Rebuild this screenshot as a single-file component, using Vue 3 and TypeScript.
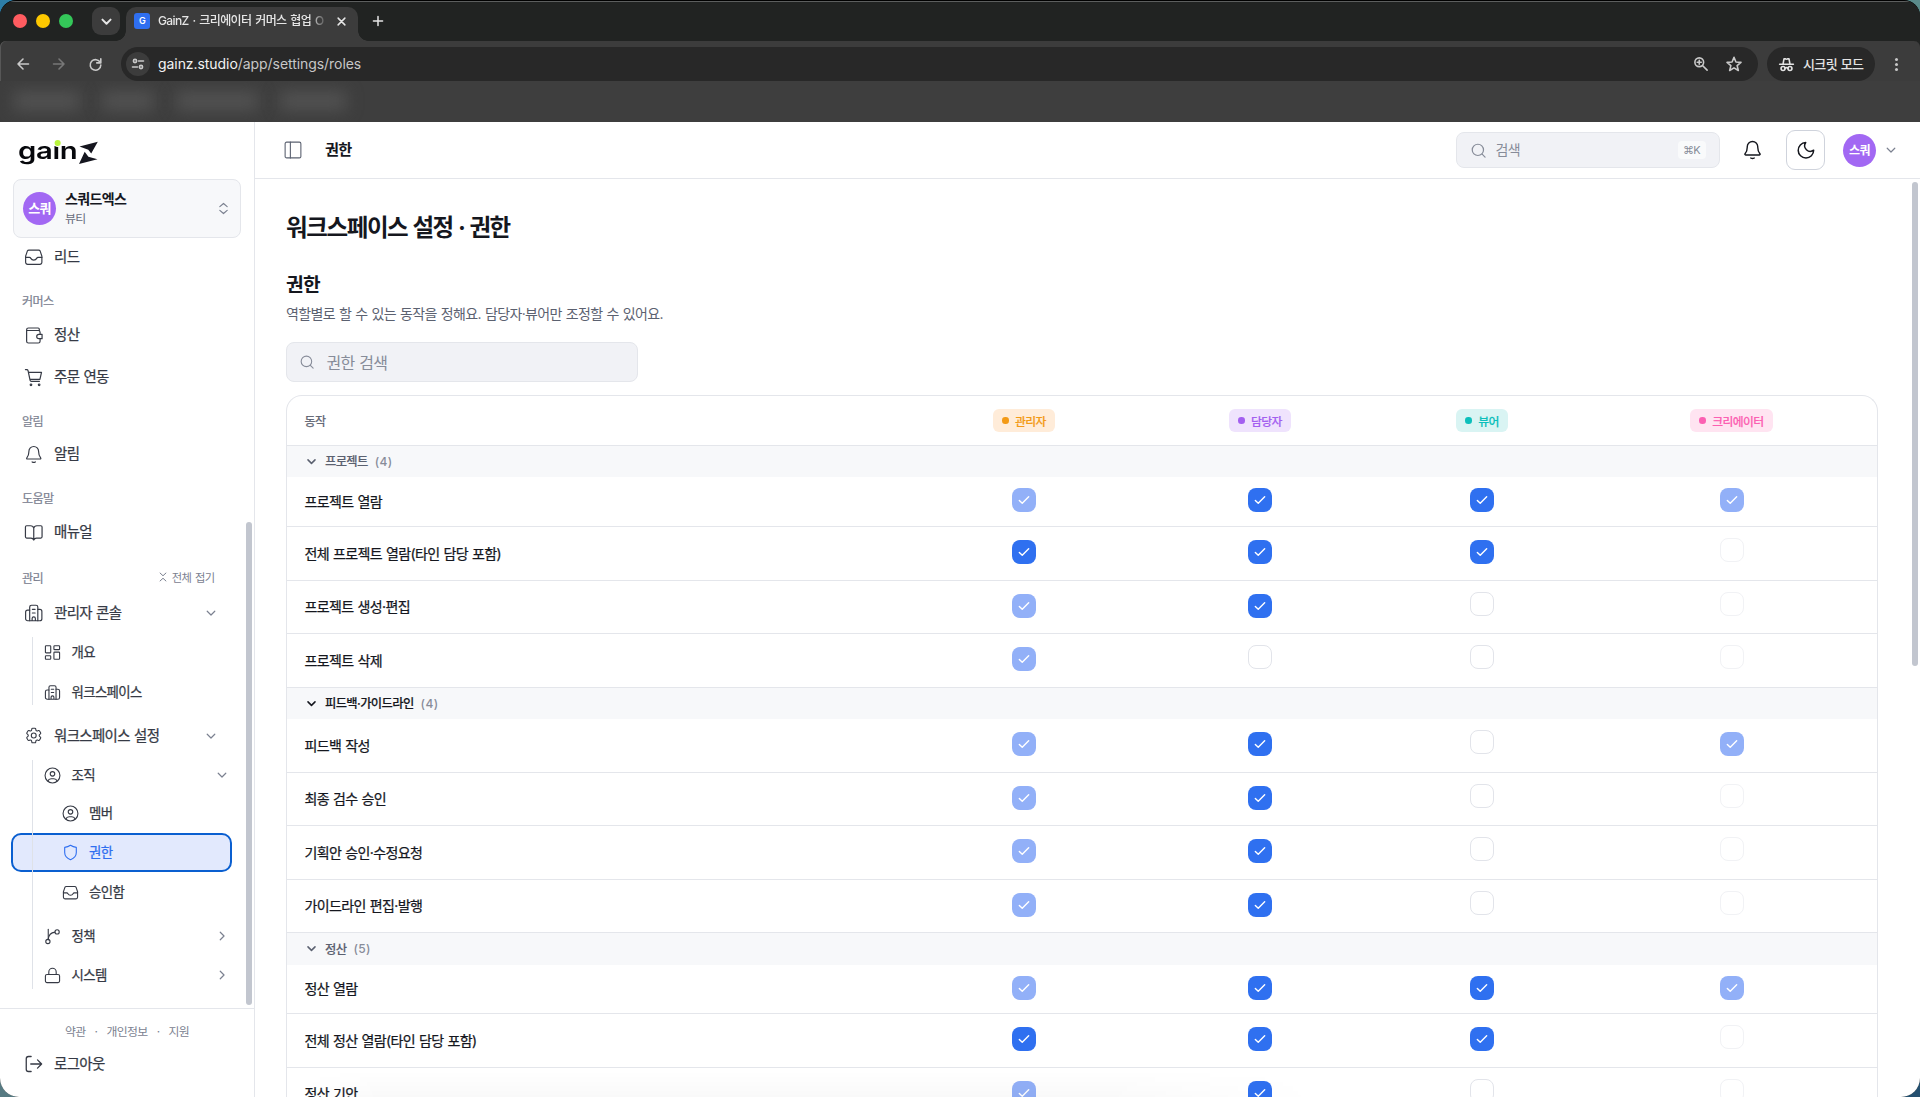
<script setup lang="ts">
import { h } from 'vue'

const shapes: Record<string, string> = {
  inbox: '<path d="M2 12.5h4.8c.8 0 1.2.5 1.6 1.2.7 1.3 1.9 2.1 3.6 2.1s2.900-.8 3.600-2.100c.4-.7.8-1.200 1.600-1.200H22"/><path d="M6 3.500h12c.8 0 1.500.4 1.900 1.200L22 11v7.500a2.500 2.500 0 0 1-2.500 2.500h-15A2.500 2.500 0 0 1 2 18.500V11l2.100-6.300c.4-.8 1.100-1.200 1.900-1.200z"/>',
  wallet: '<path d="M20 9.500V8a2.300 2.300 0 0 0-2.300-2.300H3M20 16.500v2.700a2.300 2.300 0 0 1-2.300 2.300H5.300A2.300 2.300 0 0 1 3 19.200V4.800A2.300 2.300 0 0 1 5.300 2.500h12.200c.9 0 1.500.700 1.500 1.500v1.800"/><path d="M22.500 10.500h-4a2.700 2.700 0 0 0 0 5.500h4z"/>',
  cart: '<path d="M1.500 2h1.700c.8 0 1.400.5 1.600 1.300L7.400 15.600c.2.7.7 1.200 1.500 1.200h10.300M5.300 5.500h16.500l-2 8.800H7.200"/><circle cx="8.500" cy="21.200" r="1"/><circle cx="18.800" cy="21.200" r="1"/>',
  bell: '<path d="M18 9.300V8.800a6 6 0 0 0-12 0v.5c0 3.700-1 5.800-2.500 7.600-.5.600-.2 1.300.6 1.300h15.800c.8 0 1.100-.7.6-1.300C19 15.100 18 13 18 9.300z"/><path d="M10 21.700c1.200.7 2.800.7 4 0"/>',
  book: '<path d="M12 6.500v15M12 6.500C11.500 4.500 10 3.500 8 3.500H3A1.500 1.500 0 0 0 1.500 5v12.500A1.500 1.500 0 0 0 3 19h5.500c1.800 0 3 .8 3.500 2.500.5-1.700 1.700-2.500 3.500-2.500H21a1.500 1.500 0 0 0 1.500-1.500V5A1.500 1.500 0 0 0 21 3.500h-5c-2 0-3.500 1-4 3z"/>',
  building: '<path d="M7 21.500V4.700a2.200 2.200 0 0 1 2.200-2.200h5.600A2.200 2.200 0 0 1 17 4.700v16.800"/><path d="M7 8.500H4.500a2.500 2.500 0 0 0-2.500 2.500v8a2.500 2.500 0 0 0 2.500 2.500h15a2.500 2.500 0 0 0 2.500-2.500v-9a2.500 2.500 0 0 0-2.500-2.500H17M10.300 7.500h3.400M10.300 12h3.400M10 21.500v-2.800a2 2 0 0 1 4 0v2.800"/>',
  dash: '<rect x="2" y="2.500" width="7.500" height="10" rx="1"/><rect x="14" y="2.500" width="8" height="5.500" rx="1"/><rect x="14" y="11.500" width="8" height="10" rx="1"/><rect x="2" y="16.500" width="7.500" height="5" rx="1"/>',
  gear: '<path d="M9.594 3.940c.09-.542.56-.940 1.110-.940h2.593c.55 0 1.020.398 1.110.940l.213 1.281c.063.374.313.686.645.870.074.040.147.083.220.127.325.196.720.257 1.075.124l1.217-.456a1.125 1.125 0 0 1 1.370.490l1.296 2.247a1.125 1.125 0 0 1-.260 1.431l-1.003.827c-.293.241-.438.613-.430.992v.255c-.008.378.137.750.430.991l1.004.827c.424.350.534.955.260 1.430l-1.298 2.247a1.125 1.125 0 0 1-1.369.491l-1.217-.456c-.355-.133-.750-.072-1.076.124-.072.044-.146.087-.220.128-.331.183-.581.495-.644.869l-.213 1.281c-.090.543-.560.940-1.110.940h-2.594c-.550 0-1.019-.398-1.110-.940l-.213-1.281c-.062-.374-.312-.686-.644-.870-.074-.041-.148-.083-.220-.127-.325-.196-.720-.257-1.076-.124l-1.217.456a1.125 1.125 0 0 1-1.369-.490l-1.297-2.247a1.125 1.125 0 0 1 .260-1.431l1.004-.827c.292-.240.437-.613.430-.991v-.255c.007-.380-.138-.751-.430-.992l-1.004-.827a1.125 1.125 0 0 1-.260-1.430l1.297-2.247a1.125 1.125 0 0 1 1.370-.491l1.216.456c.356.133.751.072 1.076-.124.072-.044.146-.086.220-.128.332-.183.582-.495.644-.869z"/><circle cx="12" cy="12" r="3"/>',
  user: '<circle cx="12" cy="12" r="10.500"/><circle cx="12" cy="9.700" r="3.200"/><path d="M5.500 19.800c.8-2.300 2.300-3.300 4.500-3.300h4c2.200 0 3.700 1 4.500 3.300"/>',
  shield: '<path d="M12 1.800c2.400 1.700 5 2.700 8.200 2.900v7.300c0 5.200-3.600 8.300-8.200 10.200-4.600-1.900-8.200-5-8.200-10.200V4.700C7 4.500 9.600 3.500 12 1.800z"/>',
  branch: '<path d="M6 2v14.500"/><circle cx="5.500" cy="19" r="3"/><circle cx="18.500" cy="5.500" r="3"/><path d="M15.500 5.800C9.500 6.500 6.500 10 6 16"/>',
  lock: '<rect x="2" y="10.500" width="20" height="11.500" rx="2.200"/><path d="M6.800 10.500V7a5.200 5.200 0 0 1 10.400 0v3.500"/>',
  logout: '<path d="M8.500 2H5a3 3 0 0 0-3 3v14a3 3 0 0 0 3 3h3.500M8 12h14.500M17 6.500l5.500 5.500-5.500 5.500"/>',
  panel: '<rect x="1.500" y="1.500" width="21" height="21" rx="2"/><path d="M8.500 1.500v21"/>',
  search: '<circle cx="11" cy="11" r="9"/><path d="m17.800 17.800 4.700 4.700"/>',
  moon: '<path d="M11.600 2a7.500 7.500 0 0 0 10.600 10.300A10.300 10.300 0 1 1 11.600 2z"/>',
  down: '<path d="m5.500 9 6.500 6.500L18.500 9"/>',
  right: '<path d="m9 5.500 6.500 6.500L9 18.500"/>',
  updown: '<path d="m4 8 8-7 8 7M4 16l8 7 8-7"/>',
  fold: '<path d="m5 2.500 7 6.500 7-6.500M5 21.500l7-6.500 7 6.500"/>',
  check: '<path d="m4 12.700 5 5L20 6.500"/>',
  close: '<path d="m3 3 18 18M21 3 3 21"/>',
  plus: '<path d="M12 1v22M1 12h22"/>',
  back: '<path d="M23 12H2M12 2 2 12l10 10"/>',
  forward: '<path d="M1 12h21M12 2l10 10-10 10"/>',
  reload: '<path d="M20.800 8.500A9.800 9.800 0 1 0 21.800 13M21.800 1.500v7.500H14.300"/>',
  tune: '<circle cx="6" cy="6" r="3.200"/><path d="M13 6h10M1 18h10"/><circle cx="18" cy="18" r="3.200"/>',
  zoomin: '<circle cx="9" cy="9" r="7.500"/><path d="m14.500 14.500 8 8M5.500 9h7M9 5.500v7"/>',
  star: '<path d="m12 2 2.900 7 7.600.6-5.800 4.900 1.800 7.300-6.500-3.900-6.500 3.900 1.800-7.300-5.800-4.900L9.100 9z"/>',
  incognito: '<path d="M6.500 11 8 3h2.500c1 .700 2 .700 3 0H16l1.500 8M1 11.500h22M9.500 18c1.500-1.200 3.500-1.200 5 0"/><circle cx="6.500" cy="18.300" r="3.200"/><circle cx="17.500" cy="18.300" r="3.200"/>',
}

const Icon = (p: { name: string; size: number; stroke?: number }) =>
  h('svg', {
    width: p.size,
    height: p.size,
    viewBox: '0 0 24 24',
    fill: 'none',
    stroke: 'currentColor',
    'stroke-width': ((p.stroke ?? 1.2) * 24) / p.size,
    'stroke-linecap': 'round',
    'stroke-linejoin': 'round',
    style: 'flex:none;display:block;overflow:visible',
    innerHTML: shapes[p.name],
  })
Icon.props = ['name', 'size', 'stroke']

interface NavItem { label: string; icon: string; height: number; level: number; arrow?: string; active?: boolean }
const adminItems: NavItem[] = [
  { label: '개요', icon: 'dash', height: 36, level: 1 },
  { label: '워크스페이스', icon: 'building', height: 44, level: 1 },
]
const settingItems: NavItem[] = [
  { label: '조직', icon: 'user', height: 36, level: 1, arrow: 'down' },
  { label: '멤버', icon: 'user', height: 40, level: 2 },
  { label: '권한', icon: 'shield', height: 39, level: 2, active: true },
  { label: '승인함', icon: 'inbox', height: 40, level: 2 },
  { label: '정책', icon: 'branch', height: 48, level: 1, arrow: 'right' },
  { label: '시스템', icon: 'lock', height: 30, level: 1, arrow: 'right' },
]

const roles = [
  { label: '관리자', tone: 'orange' },
  { label: '담당자', tone: 'purple' },
  { label: '뷰어', tone: 'teal' },
  { label: '크리에이터', tone: 'pink' },
]

// Cell codes: C checked, c checked and locked, E empty, e empty and locked
interface Row { label: string; cells: string; height: number }
interface Group { label: string; count: number; height: number; hover?: boolean; rows: Row[] }
const groups: Group[] = [
  {
    label: '프로젝트', count: 4, height: 31,
    rows: [
      { label: '프로젝트 열람', cells: 'cCCc', height: 50 },
      { label: '전체 프로젝트 열람(타인 담당 포함)', cells: 'CCCe', height: 54 },
      { label: '프로젝트 생성·편집', cells: 'cCEe', height: 53 },
      { label: '프로젝트 삭제', cells: 'cEEe', height: 54 },
    ],
  },
  {
    label: '피드백·가이드라인', count: 4, height: 31, hover: true,
    rows: [
      { label: '피드백 작성', cells: 'cCEc', height: 54 },
      { label: '최종 검수 승인', cells: 'cCEe', height: 53 },
      { label: '기획안 승인·수정요청', cells: 'cCEe', height: 54 },
      { label: '가이드라인 편집·발행', cells: 'cCEe', height: 53 },
    ],
  },
  {
    label: '정산', count: 5, height: 32,
    rows: [
      { label: '정산 열람', cells: 'cCCc', height: 49 },
      { label: '전체 정산 열람(타인 담당 포함)', cells: 'CCCe', height: 54 },
      { label: '정산 기안', cells: 'cCEe', height: 53 },
    ],
  },
]
const hasEmpty = (r: Row) => /e/i.test(r.cells)
const isOn = (c: string) => c === 'C' || c === 'c'
const isLocked = (c: string) => c === 'c' || c === 'e'
</script>

<template>
  <div class="desktop">
    <div class="window">
      <div class="tabstrip">
        <div class="lights"><i class="red"></i><i class="yellow"></i><i class="green"></i></div>
        <div class="tabmenu"><Icon name="down" :size="15" :stroke="2" /></div>
        <div class="tab">
          <div class="favicon">G</div>
          <div class="tabtitle">GainZ · 크리에이터 커머스 협업 O</div>
          <Icon name="close" :size="9" :stroke="1.5" />
        </div>
        <div class="newtab"><Icon name="plus" :size="10" :stroke="1.5" /></div>
      </div>
      <div class="toolbar">
        <div class="navbtn"><Icon name="back" :size="12" :stroke="1.6" /></div>
        <div class="navbtn off"><Icon name="forward" :size="12" :stroke="1.6" /></div>
        <div class="navbtn"><Icon name="reload" :size="13" :stroke="1.6" /></div>
        <div class="address">
          <div class="site"><Icon name="tune" :size="12" :stroke="1.6" /></div>
          <div class="url"><b>gainz.studio</b>/app/settings/roles</div>
          <Icon name="zoomin" :size="14" :stroke="1.6" />
          <Icon class="star" name="star" :size="16" :stroke="1.6" />
        </div>
        <div class="secret"><Icon name="incognito" :size="15" :stroke="1.6" /><span>시크릿 모드</span></div>
        <div class="dots"><i></i><i></i><i></i></div>
      </div>
      <div class="bookmarks"><i style="width: 66px"></i><i style="width: 52px"></i><i style="width: 82px"></i><i style="width: 66px"></i></div>

      <div class="app">
        <aside>
          <div class="logo">
            <span class="word">gain<i></i></span>
            <svg width="20" height="24" viewBox="0 0 20 24"><path d="M0.500 5.500 18.800.800 12.200 12.500 9.300 8.800Z" fill="#15161f" /><path d="M0 23 5.700 10.800 9.400 15.800 18.500 18.300Z" fill="#15161f" /></svg>
          </div>
          <div class="workspace">
            <div class="avatar big">스쿼</div>
            <div class="wsname"><strong>스쿼드엑스</strong><span>뷰티</span></div>
            <Icon name="updown" :size="11" :stroke="1.2" />
          </div>
          <nav>
            <div class="item first"><Icon name="inbox" :size="20" /><span>리드</span></div>
            <div class="label" style="height: 36px">커머스</div>
            <div class="item"><Icon name="wallet" :size="19" /><span>정산</span></div>
            <div class="item"><Icon name="cart" :size="19" /><span>주문 연동</span></div>
            <div class="label" style="height: 35px">알림</div>
            <div class="item"><Icon name="bell" :size="20" /><span>알림</span></div>
            <div class="label" style="height: 36px">도움말</div>
            <div class="item"><Icon name="book" :size="19" /><span>매뉴얼</span></div>
            <div class="label" style="height: 39px">관리<span class="collapse"><Icon name="fold" :size="10" :stroke="1" />전체 접기</span></div>
            <div class="item"><Icon name="building" :size="20" /><span>관리자 콘솔</span><Icon class="arrow" name="down" :size="14" /></div>
            <div class="tree admin">
              <div v-for="n in adminItems" :key="n.label" class="sub" :style="{ height: n.height + 'px' }"><Icon :name="n.icon" :size="17" :stroke="1.1" /><span>{{ n.label }}</span></div>
            </div>
            <div class="item settings"><Icon name="gear" :size="21" /><span>워크스페이스 설정</span><Icon class="arrow" name="down" :size="14" /></div>
            <div class="tree org">
              <div v-for="n in settingItems" :key="n.label" class="sub" :class="{ deep: n.level === 2, active: n.active }" :style="{ height: n.height + 'px' }">
                <Icon :name="n.icon" :size="17" :stroke="1.1" /><span>{{ n.label }}</span><Icon v-if="n.arrow" class="arrow" :name="n.arrow" :size="14" />
              </div>
            </div>
            <div class="thumb side"></div>
          </nav>
          <footer>
            <div class="legal"><span>약관</span><span>·</span><span>개인정보</span><span>·</span><span>지원</span></div>
            <div class="item"><Icon name="logout" :size="18" :stroke="1.3" /><span>로그아웃</span></div>
          </footer>
        </aside>

        <main>
          <header>
            <Icon name="panel" :size="18" :stroke="1.1" class="panel" />
            <div class="crumb">권한</div>
            <div class="topsearch"><Icon name="search" :size="15" :stroke="1.2" /><span>검색</span><kbd>⌘K</kbd></div>
            <div class="bell"><Icon name="bell" :size="21" :stroke="1.4" /></div>
            <div class="theme"><Icon name="moon" :size="18" :stroke="1.5" /></div>
            <div class="avatar">스쿼</div>
            <Icon name="down" :size="14" :stroke="1.2" class="topdown" />
          </header>
          <div class="page">
            <h1>워크스페이스 설정 · 권한</h1>
            <h2>권한</h2>
            <p>역할별로 할 수 있는 동작을 정해요. 담당자·뷰어만 조정할 수 있어요.</p>
            <div class="filter"><Icon name="search" :size="14" :stroke="1.1" /><span>권한 검색</span></div>
            <div class="table">
              <div class="row head">
                <div class="name">동작</div>
                <div v-for="r in roles" :key="r.label" class="cell"><span class="pill" :class="r.tone"><i></i>{{ r.label }}</span></div>
              </div>
              <template v-for="g in groups" :key="g.label">
                <div class="group" :class="{ hover: g.hover }" :style="{ height: g.height + 'px' }"><Icon name="down" :size="13" :stroke="1.5" /><span>{{ g.label }}</span><em>({{ g.count }})</em></div>
                <div v-for="r in g.rows" :key="r.label" class="row" :class="{ mixed: hasEmpty(r) }" :style="{ height: r.height + 'px' }">
                  <div class="name">{{ r.label }}</div>
                  <div v-for="(c, i) in r.cells.split('')" :key="i" class="cell">
                    <div class="box" :class="{ on: isOn(c), locked: isLocked(c) }"><Icon v-if="isOn(c)" name="check" :size="14" :stroke="1.4" /></div>
                  </div>
                </div>
              </template>
            </div>
          </div>
          <div class="thumb content"></div>
          <div class="shade"></div>
        </main>
      </div>
    </div>
  </div>
</template>

<style>
html, body { margin: 0; overflow: hidden; }
</style>
<style scoped>
* { box-sizing: border-box; }
.desktop { width: 1920px; height: 1097px; overflow: hidden; background: linear-gradient(90deg, #2d7ea8 0, #5a8a8a 100%) top / 100% 50% no-repeat, linear-gradient(90deg, #567a82, #245070) bottom / 100% 50% no-repeat; font-family: Inter, "Noto Sans CJK KR", sans-serif; font-size: 14px; letter-spacing: -.045em; word-spacing: .05em; color: #15171e; }
.window { width: 1920px; height: 1097px; display: flex; flex-direction: column; overflow: hidden; border-radius: 16px 16px 19px 19px; background: #212322; border-top: 1px solid #000; }
.tabstrip { height: 40px; display: flex; align-items: flex-start; border-top: 1px solid #5c5e5e; background: #212322; color: #e6e6e6; padding-left: 13px; }
.lights { display: flex; gap: 9px; padding-top: 12px; width: 79px; }
.lights i { width: 14px; height: 14px; border-radius: 50%; }
.red { background: #ff5c60; } .yellow { background: #fdc800; } .green { background: #34c759; }
.tabmenu { margin-top: 5px; width: 28px; height: 28px; border-radius: 9px; background: #3c3c3c; display: flex; align-items: center; justify-content: center; }
.tab { position: relative; margin: 5px 0 0 6px; width: 232px; height: 34px; border-radius: 10px 10px 0 0; background: #3c3c3c; display: flex; align-items: center; padding: 0 12px 6px 8px; }
.tab::before, .tab::after { content: ""; position: absolute; bottom: 0; width: 10px; height: 10px; }
.tab::before { left: -10px; background: radial-gradient(circle at 0 0, transparent 9.500px, #3c3c3c 10px); }
.tab::after { right: -10px; background: radial-gradient(circle at 100% 0, transparent 9.500px, #3c3c3c 10px); }
.favicon { width: 16px; height: 16px; border-radius: 3px; background: #2f6ff0; color: #fff; font-size: 9px; font-weight: 600; line-height: 16px; text-align: center; margin-right: 8px; }
.tabtitle { width: 168px; margin-right: 11px; font-size: 12px; font-weight: 500; line-height: 18px; letter-spacing: -.63px; word-spacing: 1.300px; white-space: nowrap; overflow: hidden; mask-image: linear-gradient(90deg, #000 152px, transparent 170px); }
.newtab { margin: 14px 0 0 15px; }
.toolbar { height: 40px; flex: none; display: flex; align-items: center; padding: 6px 0 0; background: #3c3c3c; color: #c9c9c9; box-shadow: inset 1px 0 #575757; border-radius: 6px 6px 0 0; }
.navbtn { width: 36px; display: flex; justify-content: center; margin-left: 0; }
.navbtn:first-child { margin-left: 5px; }
.navbtn.off { color: #777; }
.address { margin-left: 8px; width: 1637px; height: 34px; border-radius: 17px; background: #282828; display: flex; align-items: center; padding: 0 16px 0 5px; }
.site { width: 24px; height: 24px; border-radius: 50%; background: #3c3c3c; display: flex; align-items: center; justify-content: center; }
.url { flex: 1; margin-left: 8px; padding-bottom: 1.500px; font-size: 14px; letter-spacing: -.06px; color: #c7c7c7; }
.url b { font-weight: 400; color: #f3f3f3; }
.star { margin-left: 18px; }
.secret { margin-left: 9px; width: 108px; height: 34px; border-radius: 17px; background: #282828; display: flex; align-items: center; padding-left: 12px; gap: 9px; color: #e3e3e3; font-size: 13px; font-weight: 500; letter-spacing: -.6px; white-space: nowrap; }
.secret span { padding-bottom: 2px; }
.dots { margin-left: 20px; display: flex; flex-direction: column; gap: 2px; }
.dots i { width: 3px; height: 3px; border-radius: 50%; background: #c7c7c7; }
.bookmarks { height: 41px; flex: none; background: #3e3e3e; padding: 11px 0 0 14px; display: flex; gap: 22px; overflow: hidden; }
.bookmarks i { height: 18px; background: #535353; filter: blur(8px); }
.app { flex: 1; min-height: 0; display: flex; background: #fff; overflow: hidden; }

aside { width: 255px; flex: none; border-right: 1px solid #e4e6eb; display: flex; flex-direction: column; color: #363a45; }
.logo { height: 57px; padding: 13px 0 0 18px; display: flex; align-items: flex-start; flex: none; }
.logo svg { margin-top: 6px; }
.word { position: relative; display: block; width: 61px; height: 34px; padding-top: 1.500px; font-size: 24px; font-weight: 600; line-height: 28px; letter-spacing: -.3px; color: #07080c; transform: scaleX(1.220); transform-origin: 0 0; }
.word i { position: absolute; left: 30px; top: 5px; width: 5px; height: 6px; border-radius: 50%; background: #b9f53d; box-shadow: 0 0 0 1px #fff; }
.workspace { flex: none; margin: 0 13px; height: 59px; border: 1px solid #e4e6eb; border-radius: 8px; background: #f7f8fa; display: flex; align-items: center; padding: 0 11.500px 0 9px; color: #7b8190; }
.avatar { width: 33px; height: 33px; flex: none; padding-bottom: 2px; border-radius: 50%; background: #a268f3; color: #fff; font-size: 12px; font-weight: 700; display: flex; align-items: center; justify-content: center; }
.avatar.big { font-size: 13px; }
.wsname { flex: 1; margin-left: 9px; padding-bottom: 1px; display: flex; flex-direction: column; }
.wsname strong { margin-bottom: 2px; font-size: 14px; line-height: 19px; color: #15171e; font-weight: 700; }
.wsname span { font-size: 11.900px; line-height: 17px; color: #666c7a; }
nav { position: relative; height: 770px; flex: none; }
.item, .sub, .name { font-weight: 400; -webkit-text-stroke: .25px currentColor; }
.item { height: 42px; display: flex; align-items: center; padding-left: 23.500px; font-size: 14.450px; white-space: nowrap; }
.item > svg:first-child { width: 19.500px; }
.item span { margin-left: 11px; flex: 1; padding-bottom: 3px; }
.item .arrow { margin-right: 36px; color: #7b8190; }
.item.first { margin-top: -2px; }
.item.settings { height: 43px; }
.label { display: flex; align-items: center; justify-content: space-between; padding: 9px 39.500px 0 22px; font-size: 12.100px; font-weight: 400; -webkit-text-stroke: .2px currentColor; color: #7b8190; }
.collapse { display: flex; align-items: center; gap: 4px; font-size: 11.300px; word-spacing: 1.200px; -webkit-text-stroke: 0; }
.tree { position: relative; }
.tree::before { content: ""; position: absolute; z-index: 1; left: 32px; width: 1px; background: #dfe2e8; }
.admin::before { top: 3px; bottom: 9px; }
.org::before { top: 3px; bottom: 1px; }
.sub { display: flex; align-items: center; padding-left: 44px; font-size: 13.400px; }
.sub span { margin-left: 10.500px; flex: 1; padding-bottom: 2px; }
.sub .arrow { margin-right: 25px; color: #7b8190; }
.deep { padding-left: 61.500px; }
.deep span { margin-left: 10.500px; }
.active { margin: 0 22px 0 11px; padding: 0 0 1px 48.500px; border: 2px solid #0a5fd0; border-radius: 10px; background: #e2e9fd; color: #2f6ff0; }
.thumb { position: absolute; width: 6px; border-radius: 3px; background: #c2c6cf; }
.thumb.side { right: 2px; top: 284px; height: 483px; }
footer { flex: 1; border-top: 1px solid #e4e6eb; }
.legal { display: flex; justify-content: center; gap: 9px; margin-top: 14px; height: 17px; line-height: 17px; font-size: 11.900px; color: #7b8190; }
footer .item { margin-top: 3px; }

main { position: relative; flex: 1; min-width: 0; overflow: hidden; }
header { height: 57px; border-bottom: 1px solid #e4e6eb; display: flex; align-items: center; padding-left: 29px; }
.panel { color: #5b6170; }
.crumb { flex: 1; margin-left: 23px; padding-bottom: 4px; font-size: 15.200px; font-weight: 700; }
.topsearch { width: 264px; height: 36px; border: 1px solid #e4e6eb; border-radius: 8px; background: #f1f2f6; display: flex; align-items: center; padding: 0 13px 0 14px; color: #878c99; }
.topsearch span { flex: 1; margin-left: 10px; padding-bottom: 2px; }
kbd { width: 28px; height: 18px; border-radius: 4px; background: #f9fafb; font: 400 11px/18px Inter, "DejaVu Sans", sans-serif; text-align: center; }
.bell { width: 21px; margin-left: 22.500px; padding-bottom: 1px; }
.theme { margin-left: 23px; width: 39px; height: 40px; border: 1px solid #cfd3dc; border-radius: 9px; display: flex; align-items: center; justify-content: center; }
header .avatar { margin-left: 18px; }
.topdown { margin: 0 22px 0 8px; color: #7b8190; }
.page { padding: 31px 0 0 31px; width: 1623px; }
h1 { margin: 0; height: 36px; line-height: 36px; font-size: 23.500px; font-weight: 700; letter-spacing: -1.400px; word-spacing: .900px; }
h2 { margin: 27px 0 0; height: 24px; line-height: 24px; font-size: 19.200px; font-weight: 700; letter-spacing: -.7px; }
p { margin: 8px 0 0; height: 18px; line-height: 18px; color: #5b6170; }
.filter { margin-top: 19px; width: 352px; height: 40px; border: 1px solid #e4e6eb; border-radius: 8px; background: #f1f2f6; display: flex; align-items: center; padding-left: 13px; font-size: 16px; color: #878c99; }
.filter span { margin-left: 12.500px; padding-bottom: 1px; }
.table { margin-top: 13px; border: 1px solid #e4e6eb; border-bottom: 0; border-radius: 16px 16px 0 0; overflow: hidden; }
.row { display: grid; grid-template-columns: 619px 236px 236px 208px 291px; border-bottom: 1px solid #e4e6eb; }
.row.head { height: 50px; }
.name { align-self: center; padding: 0 0 2px 17.500px; }
.head .name { padding-bottom: 1px; font-size: 12px; color: #5b6170; }
.cell { display: flex; justify-content: center; padding-top: 11px; }
.head .cell { padding: 0; align-items: center; }
.pill { height: 23px; border-radius: 6px; display: flex; align-items: center; padding: 0 9px 1px; font-size: 11.850px; font-weight: 500; -webkit-text-stroke: .15px currentColor; }
.pill i { width: 6.500px; height: 6.500px; border-radius: 50%; background: currentColor; margin: 1px 6.300px 0 0; }
.orange { color: #f39a16; background: #ffecd9; } .purple { color: #a35ff0; background: #efe3fd; }
.teal { color: #0cbfbb; background: #d9f4f3; } .pink { color: #fc5fb2; background: #ffe4f1; }
.group { background: #f7f8fa; display: flex; align-items: center; padding: 0 0 1px 18px; font-size: 12.300px; font-weight: 500; color: #5b6170; }
.group span { margin-left: 7px; -webkit-text-stroke: .15px currentColor; }
.group em { font-style: normal; margin-left: 7px; font-size: 12px; color: #878c99; letter-spacing: .4px; }
.group.hover { color: #15171e; }
.box { width: 24px; height: 24px; border: 1px solid #e2e4ea; border-radius: 8px; display: flex; align-items: center; justify-content: center; color: #fff; }
.box.on { border: 0; background: #2f70f0; }
.mixed .box.on { margin-top: 2px; }
.box.on.locked { background: #92b0f8; }
.box.locked:not(.on) { border-color: #f1f2f5; }
.thumb.content { right: 2px; top: 60px; height: 484px; }
.shade { position: absolute; left: 45px; width: 1020px; bottom: 0; height: 26px; background: linear-gradient(rgba(0,0,0,0), rgba(0,0,0,.022)); mask-image: linear-gradient(90deg, transparent, #000 80px, #000 800px, transparent); }
</style>
